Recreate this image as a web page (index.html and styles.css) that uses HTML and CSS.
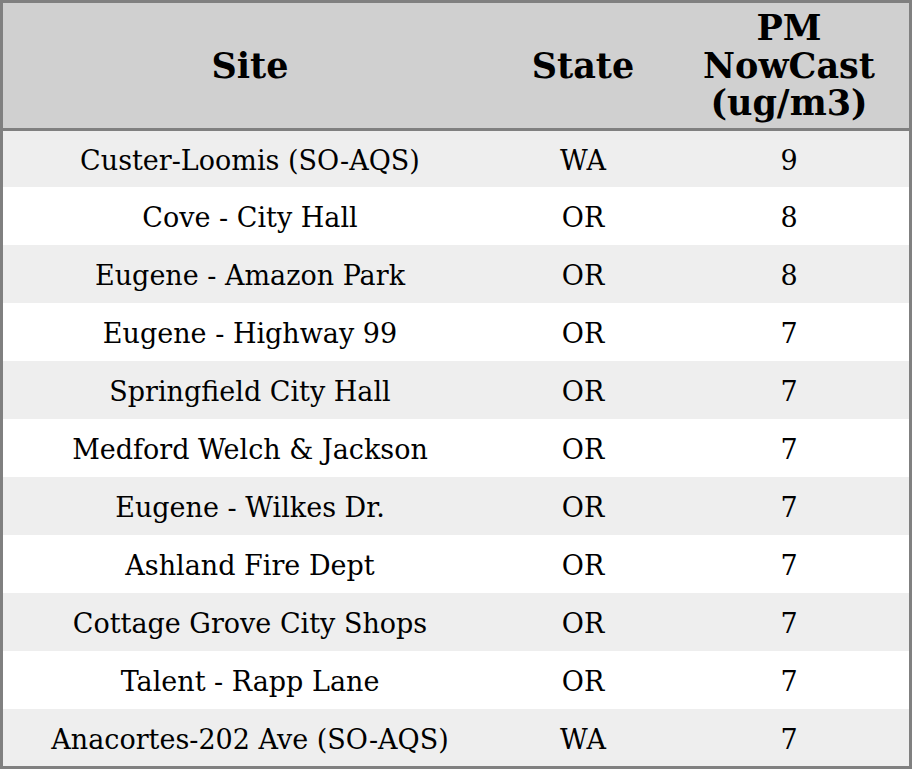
FILE: index.html
```html
<!DOCTYPE html>
<html>
<head>
<meta charset="utf-8">
<link rel="stylesheet" href="styles.css">
</head>
<body>
<table class="aq">
  <colgroup>
    <col class="c-site">
    <col class="c-state">
    <col class="c-pm">
  </colgroup>
  <thead>
    <tr class="head">
      <th>Site</th>
      <th>State</th>
      <th>PM<br>NowCast<br>(ug/m3)</th>
    </tr>
  </thead>
  <tbody>
    <tr class="first"><td>Custer-Loomis (SO-AQS)</td><td>WA</td><td>9</td></tr>
    <tr><td>Cove - City Hall</td><td>OR</td><td>8</td></tr>
    <tr><td>Eugene - Amazon Park</td><td>OR</td><td>8</td></tr>
    <tr><td>Eugene - Highway 99</td><td>OR</td><td>7</td></tr>
    <tr><td>Springfield City Hall</td><td>OR</td><td>7</td></tr>
    <tr><td>Medford Welch &amp; Jackson</td><td>OR</td><td>7</td></tr>
    <tr><td>Eugene - Wilkes Dr.</td><td>OR</td><td>7</td></tr>
    <tr><td>Ashland Fire Dept</td><td>OR</td><td>7</td></tr>
    <tr><td>Cottage Grove City Shops</td><td>OR</td><td>7</td></tr>
    <tr><td>Talent - Rapp Lane</td><td>OR</td><td>7</td></tr>
    <tr class="last"><td>Anacortes-202 Ave (SO-AQS)</td><td>WA</td><td>7</td></tr>
  </tbody>
</table>
</body>
</html>
```
FILE: styles.css
```css
html, body {
  margin: 0;
  padding: 0;
  background: #ffffff;
}
.aq {
  width: 912px;
  border-collapse: separate;
  border-spacing: 0;
  border: 3px solid #808080;
  table-layout: fixed;
  font-family: "DejaVu Serif", serif;
  color: #000000;
}
.c-site { width: 494px; }
.c-state { width: 172px; }
.c-pm { width: 240px; }
.aq th, .aq td {
  padding: 0;
  text-align: center;
  vertical-align: middle;
}
.head { height: 128px; }
.head th {
  background: #d0d0d0;
  font-weight: bold;
  font-size: 35px;
  line-height: 37.5px;
  border-bottom: 3px solid #808080;
}
.aq tbody tr { height: 58px; }
.aq td {
  padding-top: 4px;
  font-size: 27px;
  line-height: 32px;
}
.aq tbody tr:nth-child(odd) td {
  background: #eeeeee;
}
.aq tbody tr.first { height: 56px; }
.aq tbody tr.last { height: 57px; }
```
